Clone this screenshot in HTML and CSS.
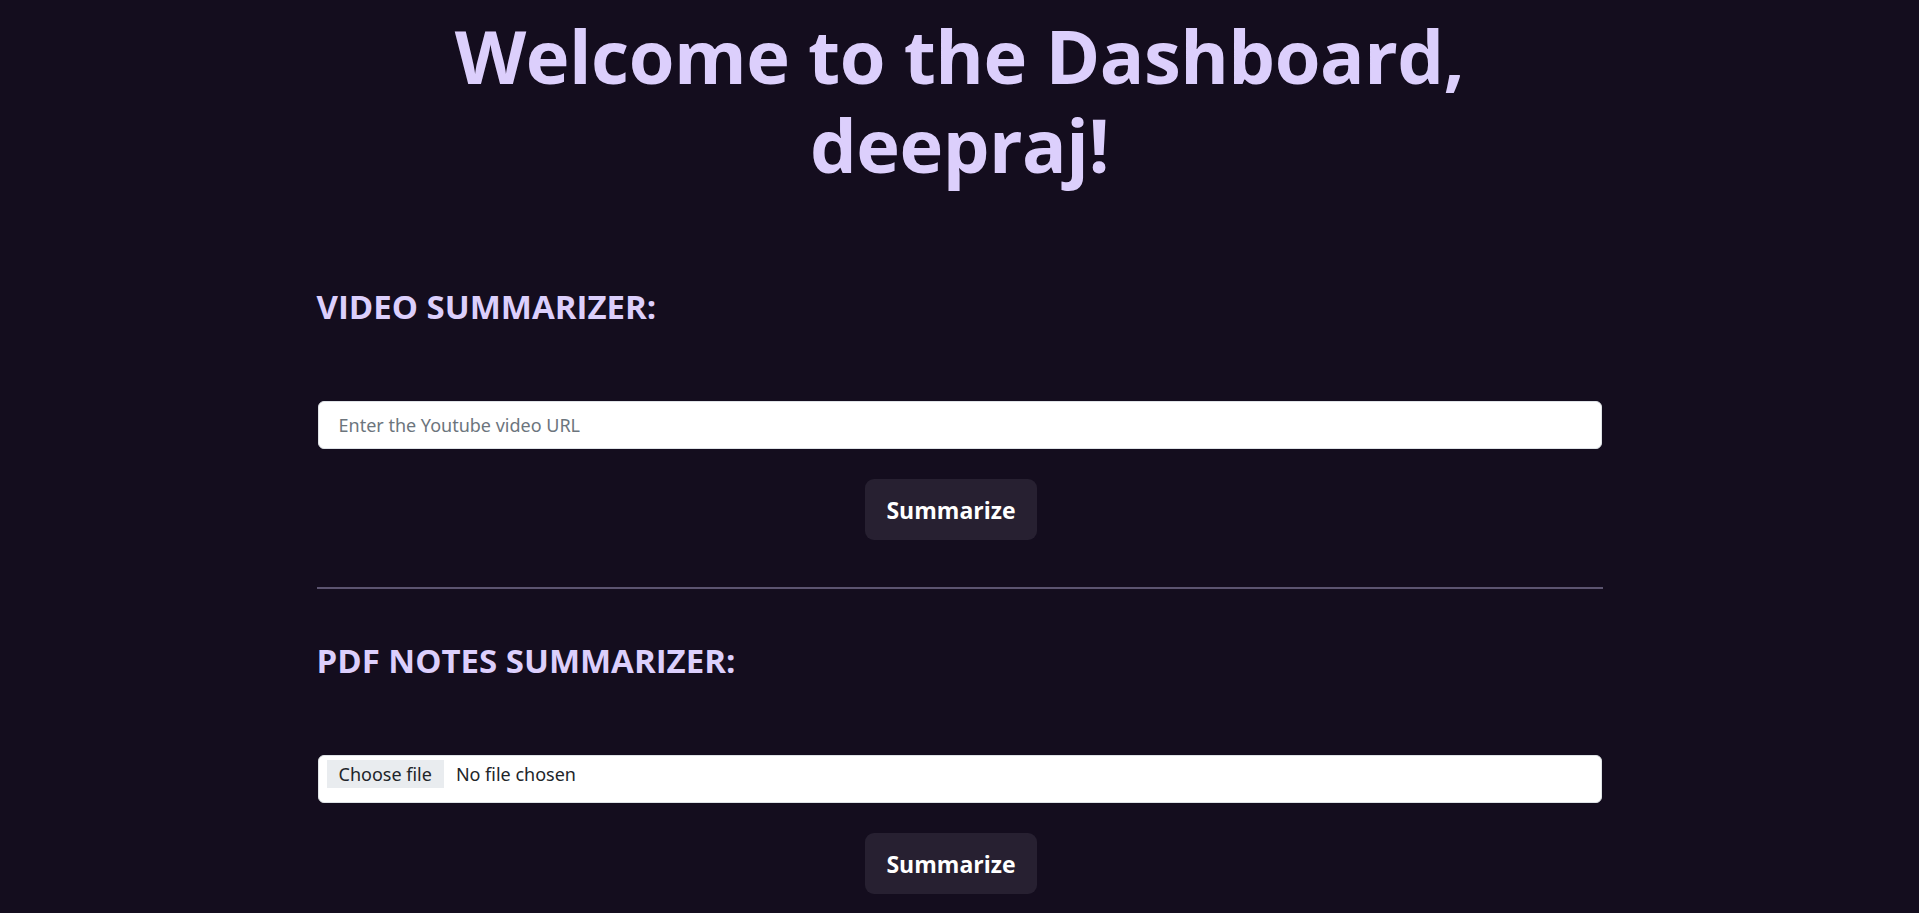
FILE: index.html
```html
<!DOCTYPE html>
<html lang="en">
<head>
<meta charset="utf-8">
<title>Dashboard</title>
<link rel="stylesheet" href="styles.css">
</head>
<body>
<main class="page">
  <h1 class="title">Welcome to the Dashboard,<br>deepraj!</h1>
  <section class="tool">
    <h2 class="tool-heading">VIDEO SUMMARIZER:</h2>
    <form class="tool-form">
      <input class="field" type="text" placeholder="Enter the Youtube video URL">
      <div class="actions"><button class="btn" type="button">Summarize</button></div>
    </form>
  </section>
  <hr class="divider">
  <section class="tool">
    <h2 class="tool-heading">PDF NOTES SUMMARIZER:</h2>
    <form class="tool-form">
      <label class="field file-field">
        <input class="file-input" type="file">
        <span class="file-btn">Choose file</span>
        <span class="file-name">No file chosen</span>
      </label>
      <div class="actions"><button class="btn" type="button">Summarize</button></div>
    </form>
  </section>
</main>
</body>
</html>
```

FILE: styles.css
```css
* { box-sizing: border-box; }
html, body { margin: 0; padding: 0; }
body {
  background: #140d1e;
  font-family: "Open Sans", "Noto Sans", sans-serif;
  color: #dccffc;
  overflow: hidden;
}
.page {
  width: 1286px;
  margin: 0 auto;
}
.title {
  margin: 11px 0 0;
  text-align: center;
  font-size: 74px;
  line-height: 89px;
  font-weight: 700;
  letter-spacing: -0.5px;
  color: #dccffc;
}
.tool-heading {
  margin: 99px 0 0;
  font-size: 33px;
  line-height: 38px;
  font-weight: 700;
  color: #dccffc;
}
.tool + .divider + .tool .tool-heading { margin-top: 53px; }
.tool-form {
  display: flex;
  flex-direction: column;
  margin-top: 75px;
}
.field {
  display: block;
  width: calc(100% - 2px);
  margin: 0 1px;
  height: 48px;
  border: 1px solid #dee2e6;
  border-radius: 6px;
  background: #fff;
  padding: 0 20px;
  font-family: "Noto Sans", sans-serif;
  font-size: 18px;
  color: #212529;
  outline: none;
}
.field::placeholder { color: #6c757d; }
.file-field {
  display: flex;
  align-items: flex-start;
  padding: 4px 8px;
  cursor: pointer;
}
.file-input { display: none; }
.file-btn {
  display: flex;
  align-items: center;
  height: 28px;
  padding: 0 12px;
  margin-right: 12px;
  background: #e9ecef;
  color: #212529;
}
.file-name {
  display: flex;
  align-items: center;
  height: 28px;
  color: #212529;
}
.actions {
  display: flex;
  justify-content: center;
  margin-top: 30px;
}
.btn {
  height: 61px;
  padding: 0 21px;
  margin-right: 17px;
  border: none;
  border-radius: 9px;
  background: #272031;
  color: #fff;
  font-family: "Open Sans", sans-serif;
  font-weight: 700;
  font-size: 23px;
}
.divider {
  margin: 47px 0 0;
  border: none;
  height: 2px;
  background: #5c5470;
}
```
